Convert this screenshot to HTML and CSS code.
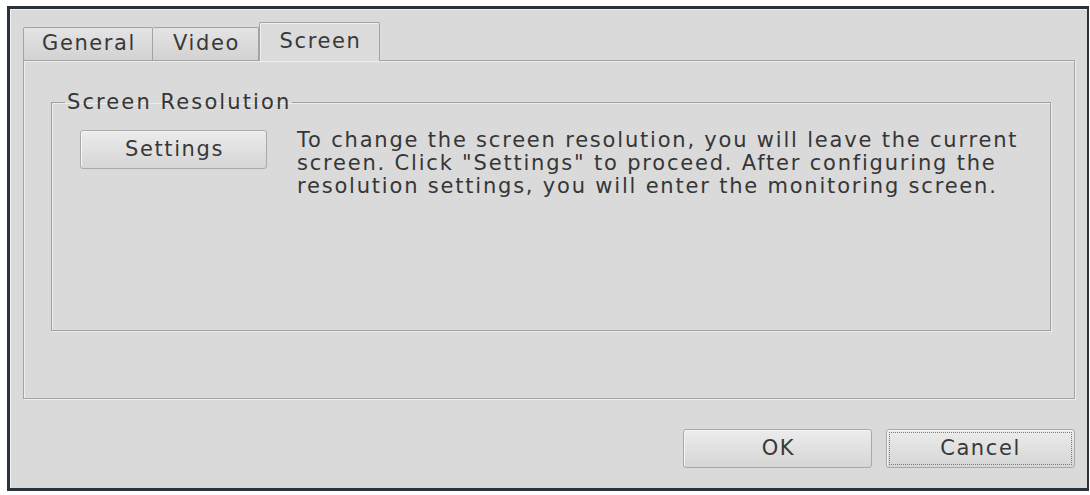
FILE: index.html
```html
<!DOCTYPE html>
<html>
<head>
<meta charset="utf-8">
<link rel="stylesheet" href="styles.css">
</head>
<body>
<div class="dialog">
  <div class="tabs">
    <div class="tab tab-general">General</div>
    <div class="tab tab-video">Video</div>
    <div class="tab tab-screen active">Screen</div>
  </div>
  <div class="pane">
    <fieldset class="group">
      <legend class="group-title">Screen Resolution</legend>
      <div class="group-body">
        <div class="btn btn-settings">Settings</div>
        <p class="desc">To change the screen resolution, you will leave the current screen. Click "Settings" to proceed. After configuring the resolution settings, you will enter the monitoring screen.</p>
      </div>
    </fieldset>
  </div>
  <div class="actions">
    <div class="btn btn-ok">OK</div>
    <div class="btn btn-cancel"><span class="focus">Cancel</span></div>
  </div>
</div>
</body>
</html>
```

FILE: styles.css
```css
html, body {
  margin: 0;
  padding: 0;
  background: #ffffff;
}
body {
  font-family: "DejaVu Sans", "Liberation Sans", sans-serif;
  font-size: 21px;
  letter-spacing: 1.6px;
  color: #363636;
}
.dialog {
  box-sizing: border-box;
  margin: 6px 0 0 7px;
  width: 1082px;
  height: 485px;
  border: 3px solid #2a323c;
  border-right-width: 2px;
  background: #dadada;
  box-shadow: inset 1px 1px 0 #eef2f6;
  padding: 13px 12px 0 13px;
  display: flex;
  flex-direction: column;
}
.tabs {
  display: flex;
  align-items: flex-end;
  height: 38px;
  position: relative;
  z-index: 1;
}
.tab {
  box-sizing: border-box;
  height: 33px;
  border: 1px solid #a3a3a3;
  border-bottom: none;
  background: linear-gradient(#e4e4e4, #d2d2d2);
  text-align: center;
  text-indent: 2px;
  line-height: 31px;
  border-radius: 2px 2px 0 0;
  color: #383838;
}
.tab-general { width: 130px; }
.tab-video { width: 106px; border-left: none; }
.tab-screen { width: 121px; }
.tab.active {
  height: 39px;
  margin-bottom: -1px;
  background: #dbdbdb;
  line-height: 36px;
  box-shadow: inset 1px 1px 0 #f0f0f0;
}
.pane {
  box-sizing: border-box;
  width: 1052px;
  height: 339px;
  border: 1px solid #a3a3a3;
  box-shadow: inset 1px 1px 0 #ededed, 1px 1px 0 #efefef;
  padding: 30px 24px 0 27px;
}
.group {
  box-sizing: border-box;
  margin: 0;
  width: 1000px;
  height: 240px;
  border: 1px solid #a0a0a0;
  box-shadow: inset 1px 1px 0 #ededed, 1px 1px 0 #ededed;
  padding: 0;
}
.group-title {
  padding: 0 1px 0 2px;
  margin-left: 13px;
  line-height: 22px;
  letter-spacing: 2.1px;
  color: #363636;
}
.group-body {
  display: flex;
  align-items: flex-start;
  gap: 30px;
  padding: 17px 0 0 28px;
}
.btn {
  box-sizing: border-box;
  height: 39px;
  border: 1px solid #a9a9a9;
  border-radius: 3px;
  background: linear-gradient(#ececec, #d5d5d5);
  box-shadow: inset 1px 1px 0 #f6f6f6;
  text-align: center;
  text-indent: 2px;
  line-height: 37px;
  color: #383838;
}
.btn-settings {
  width: 187px;
  flex: none;
}
.desc {
  margin: 0;
  margin-top: -1px;
  line-height: 23px;
  letter-spacing: 1.8px;
  width: 740px;
  color: #363636;
}
.actions {
  display: flex;
  justify-content: flex-end;
  gap: 14px;
  width: 1052px;
  padding-top: 30px;
}
.btn-ok, .btn-cancel {
  width: 189px;
}
.btn-cancel {
  padding: 2px;
}
.btn-cancel .focus {
  display: block;
  box-sizing: border-box;
  height: 33px;
  line-height: 31px;
  text-indent: 0;
  border: 1px dotted #7a7a7a;
}
```
